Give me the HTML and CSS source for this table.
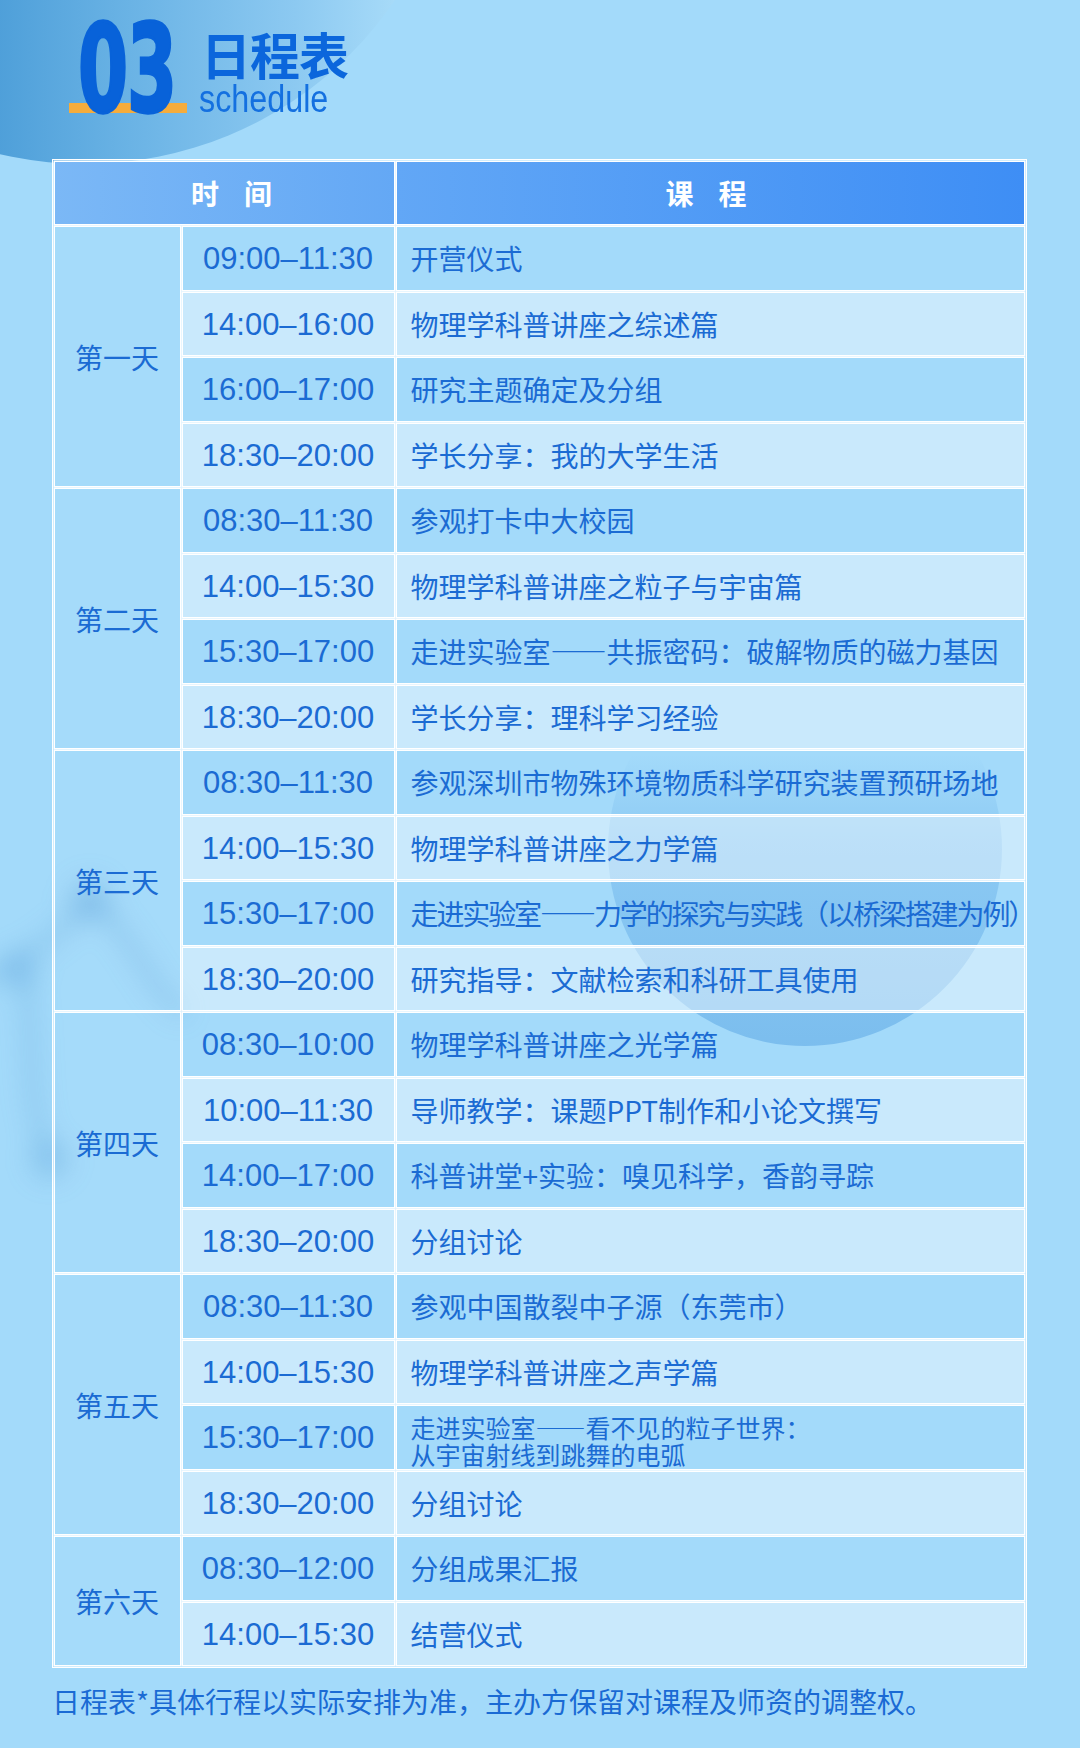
FILE: index.html
```html
<!DOCTYPE html>
<html lang="zh-CN">
<head>
<meta charset="utf-8">
<title>日程表 schedule</title>
<link rel="stylesheet" href="styles.css">
</head>
<body>
<div class="page">
  <div class="deco deco-top"></div>
  <div class="deco deco-mid"></div>
  <svg class="deco deco-left" width="220" height="360" viewBox="0 0 220 360" aria-hidden="true">
    <g fill="none" stroke="rgba(70,145,205,0.18)" stroke-width="18" stroke-linecap="round">
      <path d="M-10 150 C 30 120, 70 110, 110 60"/>
      <path d="M40 130 C 60 190, 40 250, 70 320"/>
      <path d="M110 60 C 150 90, 170 150, 200 170"/>
    </g>
    <g fill="rgba(70,145,205,0.16)">
      <circle cx="110" cy="60" r="24"/>
      <circle cx="40" cy="130" r="20"/>
      <circle cx="70" cy="320" r="22"/>
    </g>
  </svg>

  <div class="content">
    <header class="head">
      <div class="num">
        <span class="num-bar"></span>
        <span class="num-text">03</span>
      </div>
      <div class="title-text">
        <h1 class="title-cn">日程表</h1>
        <div class="title-en"><span>schedule</span></div>
      </div>
    </header>

    <div class="schedule">
      <div class="th th-time">时间</div>
      <div class="th th-course">课程</div>

      <div class="day">第一天</div>
      <div class="time">09:00–11:30</div><div class="course">开营仪式</div>
      <div class="time lt">14:00–16:00</div><div class="course lt">物理学科普讲座之综述篇</div>
      <div class="time">16:00–17:00</div><div class="course">研究主题确定及分组</div>
      <div class="time lt">18:30–20:00</div><div class="course lt">学长分享：我的大学生活</div>

      <div class="day">第二天</div>
      <div class="time">08:30–11:30</div><div class="course">参观打卡中大校园</div>
      <div class="time lt">14:00–15:30</div><div class="course lt">物理学科普讲座之粒子与宇宙篇</div>
      <div class="time">15:30–17:00</div><div class="course">走进实验室——共振密码：破解物质的磁力基因</div>
      <div class="time lt">18:30–20:00</div><div class="course lt">学长分享：理科学习经验</div>

      <div class="day">第三天</div>
      <div class="time">08:30–11:30</div><div class="course">参观深圳市物殊环境物质科学研究装置预研场地</div>
      <div class="time lt">14:00–15:30</div><div class="course lt">物理学科普讲座之力学篇</div>
      <div class="time">15:30–17:00</div><div class="course tight">走进实验室——力学的探究与实践（以桥梁搭建为例）</div>
      <div class="time lt">18:30–20:00</div><div class="course lt">研究指导：文献检索和科研工具使用</div>

      <div class="day">第四天</div>
      <div class="time">08:30–10:00</div><div class="course">物理学科普讲座之光学篇</div>
      <div class="time lt">10:00–11:30</div><div class="course lt">导师教学：课题PPT制作和小论文撰写</div>
      <div class="time">14:00–17:00</div><div class="course">科普讲堂+实验：嗅见科学，香韵寻踪</div>
      <div class="time lt">18:30–20:00</div><div class="course lt">分组讨论</div>

      <div class="day">第五天</div>
      <div class="time">08:30–11:30</div><div class="course">参观中国散裂中子源（东莞市）</div>
      <div class="time lt">14:00–15:30</div><div class="course lt">物理学科普讲座之声学篇</div>
      <div class="time">15:30–17:00</div><div class="course two-line"><span class="ln">走进实验室——看不见的粒子世界：</span><span class="ln">从宇宙射线到跳舞的电弧</span></div>
      <div class="time lt">18:30–20:00</div><div class="course lt">分组讨论</div>

      <div class="day day-short">第六天</div>
      <div class="time">08:30–12:00</div><div class="course">分组成果汇报</div>
      <div class="time lt">14:00–15:30</div><div class="course lt">结营仪式</div>
    </div>

    <p class="note">日程表*具体行程以实际安排为准，主办方保留对课程及师资的调整权。</p>
  </div>
</div>
</body>
</html>
```

FILE: styles.css
```css
* { box-sizing: border-box; }

html, body {
  margin: 0;
  padding: 0;
  background: #a3dafa;
}

body {
  font-family: "Noto Sans CJK SC", "Noto Sans", sans-serif;
  color: #1b6bd3;
}

.page {
  position: relative;
  width: 1080px;
  height: 1748px;
  overflow: hidden;
  background: #a3dafa;
}

.deco {
  position: absolute;
  z-index: 0;
  pointer-events: none;
}

.deco-top {
  left: -290px;
  top: -586px;
  width: 750px;
  height: 750px;
  border-radius: 50%;
  background: linear-gradient(90deg, #4e9fd9 38%, #6ab3e5 56%, #8cc9f1 78%, #a6daf8 91%, #b4e2fb 96%);
}

.deco-mid {
  left: 608px;
  top: 652px;
  width: 394px;
  height: 394px;
  border-radius: 50%;
  background: linear-gradient(180deg, rgba(120, 188, 238, 0) 26%, rgba(118, 186, 237, 0.5) 48%, rgba(110, 180, 234, 0.75) 100%);
}

.deco-left {
  left: -20px;
  top: 840px;
  filter: blur(12px);
}

.content {
  position: relative;
  z-index: 1;
  padding: 0 0 0 52px;
}

/* ---------- heading ---------- */
.head {
  display: flex;
  align-items: flex-start;
  height: 159px;
  padding: 8px 0 0 17px;
}

.num {
  position: relative;
  width: 118px;
  height: 124px;
  flex: none;
}

.num-bar {
  position: absolute;
  left: 0;
  top: 95px;
  width: 118px;
  height: 10px;
  background: #f5ac3c;
}

.num-text {
  position: relative;
  display: block;
  width: max-content;
  margin: 42px 0 0 9px;
  font-family: "DejaVu Sans", sans-serif;
  font-weight: bold;
  font-size: 72px;
  line-height: 1;
  letter-spacing: -1px;
  color: #0862d9;
  -webkit-text-stroke: 2px #0862d9;
  transform: scaleY(1.69);
  transform-origin: 0 61px;
}

.title-text {
  margin-left: 14px;
  margin-top: 20px;
}

.title-cn {
  margin: 0;
  font-size: 50px;
  line-height: 1;
  font-weight: 700;
  color: #0b66dc;
  letter-spacing: -1px;
}

.title-en {
  margin-top: 4px;
  margin-left: -2px;
  height: 34px;
  font-family: "Liberation Sans", Arial, sans-serif;
  font-size: 38px;
  line-height: 34px;
  color: #1470e0;
}

.title-en span {
  display: inline-block;
  transform: scaleX(0.85);
  transform-origin: left center;
}

/* ---------- table ---------- */
.schedule {
  display: grid;
  grid-template-columns: 125px 211px 627px;
  grid-template-rows: repeat(23, 62.5px);
  column-gap: 3px;
  row-gap: 3px;
  width: 975px;
  border: 1.5px solid #fff;
  padding: 1.5px;
}

.schedule > div {
  box-shadow: 0 0 0 1.5px #fff;
  display: flex;
  align-items: center;
  line-height: 1;
}

.th {
  justify-content: center;
  color: #fff;
  font-weight: 700;
  font-size: 28px;
  letter-spacing: 25px;
}

.th-time {
  grid-column: 1 / span 2;
  padding-left: 40px;
  background: linear-gradient(90deg, #7bb8f6, #64a8f5);
}

.th-course {
  grid-column: 3;
  padding-left: 17px;
  background: linear-gradient(90deg, #62a7f6, #3e8ef5);
}

.day {
  grid-column: 1;
  grid-row: span 4;
  justify-content: center;
  font-size: 28px;
  background: rgba(255, 255, 255, 0.03);
}

.day-short {
  grid-row: span 2;
}

.time {
  grid-column: 2;
  justify-content: center;
  font-family: "Liberation Sans", Arial, sans-serif;
  font-size: 31px;
  padding-top: 1px;
}

.course {
  grid-column: 3;
  padding-left: 14px;
  font-size: 28px;
  white-space: nowrap;
}

.lt {
  background: rgba(255, 255, 255, 0.42);
}

.course.tight {
  letter-spacing: -2.1px;
}

.schedule > .two-line {
  flex-direction: column;
  align-items: flex-start;
  justify-content: center;
  font-size: 25px;
  padding-top: 8px;
}

.two-line .ln {
  display: block;
  height: 27px;
  line-height: 27px;
}

/* ---------- note ---------- */
.note {
  margin: 19px 0 0;
  font-size: 28px;
  line-height: 1;
  color: #1a6ad4;
  white-space: nowrap;
}
```
